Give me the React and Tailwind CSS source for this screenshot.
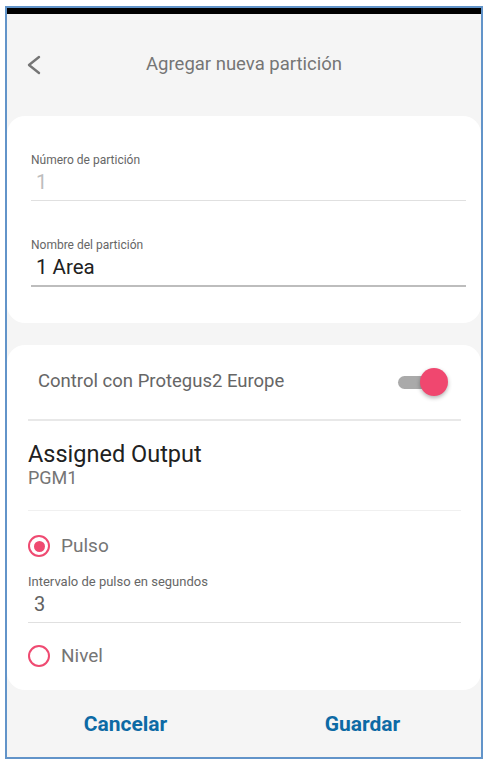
import React, { useState } from 'react';

const font = { fontFamily: 'Roboto, "Liberation Sans", sans-serif' };

const Radio = ({ checked, label, onClick }) => (
    <button type="button" onClick={onClick} className="flex items-center h-[44px] w-full">
        <span className="w-[22px] h-[22px] rounded-full border-2 border-[#ef4a71] flex items-center justify-center">
            {checked && <span className="w-[11px] h-[11px] rounded-full bg-[#ef4a71]" />}
        </span>
        <span className="ml-[11px] text-[19px] text-[#757575]">{label}</span>
    </button>
);

const App = () => {
    const [enabled, setEnabled] = useState(true);
    const [mode, setMode] = useState('pulso');
    const [name, setName] = useState('1 Area');
    const [interval, setInterval] = useState('3');

    return (
        <div className="w-[488px] h-[766px] bg-white pt-[6px] pl-[5px]" style={font}>
            <div className="w-[478px] h-[753px] border-2 border-[#6294c9] bg-[#f5f5f5] flex flex-col">
                <div className="h-[6px] bg-black" />

                {/* Header */}
                <div className="h-[102px] pb-[1px] flex items-center relative">
                    <button type="button" className="ml-[19px] p-0">
                        <svg width="16" height="20" viewBox="0 0 16 20" fill="none">
                            <polyline points="13,2 3,10 13,18" stroke="#757575" strokeWidth="2.4" strokeLinecap="round" strokeLinejoin="round" />
                        </svg>
                    </button>
                    <h1 className="absolute left-0 right-0 text-center text-[18.5px] text-[#757575] pointer-events-none">
                        Agregar nueva partición
                    </h1>
                </div>

                {/* Partition fields */}
                <div className="bg-white rounded-[18px] pl-[24px] pr-[15px] pt-[36px] pb-[36px]">
                    <label className="block text-[12px] leading-[16px] text-[#666666]">Número de partición</label>
                    <div className="text-[20px] leading-[26px] text-[#bdbdbd] mt-[1px] pl-[5px]">1</div>
                    <div className="h-px bg-[#e0e0e0] mt-[5px]" />

                    <label className="block text-[12px] leading-[16px] text-[#666666] mt-[36px]">Nombre del partición</label>
                    <input
                        value={name}
                        onChange={(e) => setName(e.target.value)}
                        className="w-full text-[20.5px] leading-[26px] text-[#212121] mt-[1px] pl-[5px] outline-none bg-transparent"
                    />
                    <div className="h-[2px] bg-[#bdbdbd] mt-[4px]" />
                </div>

                {/* Protegus control */}
                <div className="bg-white rounded-[18px] mt-[22px] pl-[21px] pr-[20px] h-[345px]">
                    <div className="h-[74px] flex items-center justify-between pl-[10px] pr-[13px]">
                        <span className="text-[18.5px] text-[#666666]">Control con Protegus2 Europe</span>
                        <button type="button" onClick={() => setEnabled(!enabled)} className="relative w-[50px] h-[28px] flex items-center">
                            <span className={`absolute left-0 w-[36px] h-[13px] rounded-full ${enabled ? 'bg-[#aaaaaa]' : 'bg-[#cfcfcf]'}`} />
                            <span className={`absolute top-0 w-[28px] h-[28px] rounded-full shadow-[0_2px_4px_rgba(0,0,0,0.3)] ${enabled ? 'right-0 bg-[#f0476f]' : 'left-0 bg-[#fafafa]'}`} />
                        </button>
                    </div>
                    <div className="h-[2px] bg-[#e8e8e8]" />

                    <div className="pt-[19px] pb-[22px]">
                        <div className="text-[23.5px] leading-[28px] text-[#212121]">Assigned Output</div>
                        <div className="text-[18px] leading-[20px] text-[#757575]">PGM1</div>
                    </div>
                    <div className="h-px bg-[#f0f0f0]" />

                    <div className="mt-[13px]">
                        <Radio checked={mode === 'pulso'} label="Pulso" onClick={() => setMode('pulso')} />
                    </div>
                    <label className="block text-[13px] leading-[16px] text-[#666666] mt-[6px]">Intervalo de pulso en segundos</label>
                    <input
                        value={interval}
                        onChange={(e) => setInterval(e.target.value)}
                        className="w-full text-[20px] leading-[26px] text-[#616161] pl-[6px] mt-[1px] outline-none bg-transparent"
                    />
                    <div className="h-px bg-[#e0e0e0] mt-[4px]" />

                    <div className="mt-[11px]">
                        <Radio checked={mode === 'nivel'} label="Nivel" onClick={() => setMode('nivel')} />
                    </div>
                </div>

                {/* Actions */}
                <div className="flex-1 flex items-center pt-[2px]">
                    <button type="button" className="w-1/2 text-[21px] font-bold text-[#0d6aa5] text-center">Cancelar</button>
                    <button type="button" className="w-1/2 text-[21px] font-bold text-[#0d6aa5] text-center">Guardar</button>
                </div>
            </div>
        </div>
    );
};

export default App;
